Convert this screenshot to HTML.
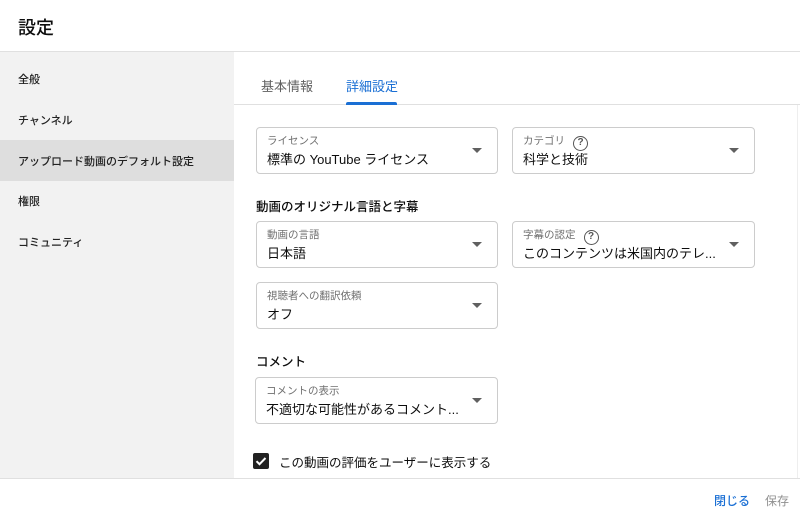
<!DOCTYPE html>
<html><head><meta charset="utf-8"><style>
*{box-sizing:border-box;margin:0;padding:0}
body{width:800px;height:521px;overflow:hidden;background:#fff;font-family:"Liberation Sans","Noto Sans CJK JP",sans-serif;color:#0d0d0d;position:relative}
.hdr{position:absolute;left:0;top:0;width:800px;height:52px;border-bottom:1px solid #e0e0e0}
.hdr h1{position:absolute;left:18px;top:14px;font-size:18px;font-weight:500}
.side{position:absolute;left:0;top:52px;width:234px;height:426px;background:#f2f2f2}
.side div{position:absolute;left:18px;font-size:11px;font-weight:500;color:#222}
.sel{position:absolute;left:0;top:88px;width:234px;height:41px;background:#dedede}
.tabs{position:absolute;left:234px;top:52px;width:566px;height:53px;border-bottom:1px solid #e0e0e0}
.tab{position:absolute;top:24px;font-size:13px;color:#606060}
.tab.a{color:#1a6fd4}
.ul{position:absolute;left:346px;top:102px;width:51px;height:3px;background:#1a6fd4;border-radius:2px 2px 0 0}
.box{position:absolute;height:47px;border:1px solid #ccc;border-radius:4px}
.box .l{position:absolute;left:10px;top:5px;font-size:10.5px;color:#707070;white-space:nowrap}
.box .v{position:absolute;left:10px;top:21px;font-size:13px;color:#0d0d0d;white-space:nowrap}
.box .ar{position:absolute;right:15px;top:20px;width:0;height:0;border-left:5px solid transparent;border-right:5px solid transparent;border-top:5px solid #606060}
.q{display:inline-block;width:15px;height:15px;border:1.5px solid #555;border-radius:50%;font-size:10px;text-align:center;line-height:12px;color:#555;margin-left:8px;vertical-align:-1px;font-weight:bold}
.h{position:absolute;left:256px;font-size:12.5px;font-weight:500}
.foot{position:absolute;left:0;top:478px;width:800px;border-top:1px solid #e0e0e0}
.sb{position:absolute;left:797px;top:105px;width:1px;height:373px;background:#eee}
</style></head><body>
<div class="hdr"><h1>設定</h1></div>
<div class="side">
<div style="top:19px">全般</div>
<div style="top:60px">チャンネル</div>
<span class="sel"></span>
<div style="top:101px">アップロード動画のデフォルト設定</div>
<div style="top:141px">権限</div>
<div style="top:182px">コミュニティ</div>
</div>
<div class="tabs">
<div class="tab" style="left:27px">基本情報</div>
<div class="tab a" style="left:112px">詳細設定</div>
</div>
<div class="ul"></div>
<div class="sb"></div>
<div class="box" style="left:256px;top:127px;width:242px"><div class="l">ライセンス</div><div class="v">標準の YouTube ライセンス</div><div class="ar"></div></div>
<div class="box" style="left:512px;top:127px;width:243px"><div class="l">カテゴリ<span class="q">?</span></div><div class="v">科学と技術</div><div class="ar"></div></div>
<div class="h" style="top:196px">動画のオリジナル言語と字幕</div>
<div class="box" style="left:256px;top:221px;width:242px"><div class="l">動画の言語</div><div class="v">日本語</div><div class="ar"></div></div>
<div class="box" style="left:512px;top:221px;width:243px"><div class="l">字幕の認定<span class="q">?</span></div><div class="v">このコンテンツは米国内のテレ...</div><div class="ar"></div></div>
<div class="box" style="left:256px;top:282px;width:242px"><div class="l">視聴者への翻訳依頼</div><div class="v">オフ</div><div class="ar"></div></div>
<div class="h" style="top:351px">コメント</div>
<div class="box" style="left:255px;top:377px;width:243px"><div class="l">コメントの表示</div><div class="v">不適切な可能性があるコメント...</div><div class="ar"></div></div>
<div style="position:absolute;left:253px;top:453px;width:16px;height:16px;background:#222;border-radius:2px">
<svg width="16" height="16" viewBox="0 0 16 16"><path d="M3.5 8.2l3 3 6-6.2" stroke="#fff" stroke-width="2" fill="none"/></svg></div>
<div style="position:absolute;left:279px;top:452px;font-size:12.5px">この動画の評価をユーザーに表示する</div>
<div class="foot"></div>
<div style="position:absolute;left:714px;top:492px;font-size:12px;color:#1a6fd4;font-weight:500">閉じる</div>
<div style="position:absolute;left:765px;top:492px;font-size:12px;color:#909090">保存</div>
</body></html>
